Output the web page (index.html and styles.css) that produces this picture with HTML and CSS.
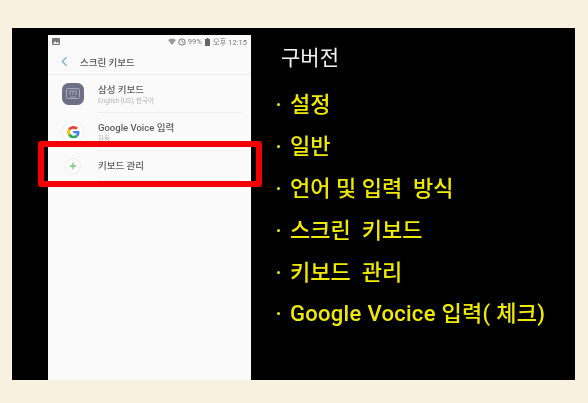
FILE: index.html
```html
<!DOCTYPE html>
<html lang="ko">
<head>
<meta charset="utf-8">
<title>키보드 설정</title>
<link rel="stylesheet" href="styles.css">
</head>
<body>
<main class="slide">
  <section class="phone">
    <div class="status">
      <svg class="pic" viewBox="0 0 8 7"><rect width="8" height="7" rx="1" fill="#777"/><path d="M1 6l2-3 1.5 2L6 3.5 7 6z" fill="#eee"/></svg>
      <div class="status-right">
        <svg class="wifi" viewBox="0 0 8 7"><path d="M0 2q4-3 8 0L4 7z" fill="#999"/></svg>
        <svg class="dnd" viewBox="0 0 8 8"><circle cx="4" cy="4" r="3.2" fill="none" stroke="#777" stroke-width="1"/><path d="M4 2v2l2 1" fill="none" stroke="#777" stroke-width=".8"/></svg>
        <span>99%</span>
        <svg class="batt" viewBox="0 0 5 8"><path d="M1.5 0h2v1H5v7H0V1h1.5z" fill="#666"/></svg>
        <span>오후 12:15</span>
      </div>
    </div>
    <header class="bar">
      <svg class="back" viewBox="0 0 8 12"><path d="M6.5 1L1.5 6l5 5" fill="none" stroke="#6fb1cf" stroke-width="1.5"/></svg>
      <span>스크린 키보드</span>
    </header>
    <div class="row row-first">
      <div class="ico-wrap">
        <svg class="ico" viewBox="0 0 22 22"><rect width="22" height="22" rx="6.5" fill="#6c7187"/><rect x="4.5" y="5.5" width="13" height="10" rx="1" fill="none" stroke="#a5a8b6" stroke-width="1"/><path d="M7 8h8M8 8v4M11 8v4M14 8v4M8 14h6" stroke="#a5a8b6" stroke-width=".9"/></svg>
      </div>
      <div class="txt rule">
        <div class="name">삼성 키보드</div>
        <div class="sub">English (US), 한국어</div>
      </div>
    </div>
    <div class="row row-google">
      <div class="ico-wrap">
        <svg class="ico" viewBox="0 0 22 22"><circle cx="11" cy="11" r="10.5" fill="#fff" stroke="#efefef"/><path d="M16 6.8A6.5 6.5 0 0 0 6.2 7.6L8.3 9.4a3.7 3.7 0 0 1 5.6-.6z" fill="#ea4335"/><path d="M6.2 7.6a6.5 6.5 0 0 0 0 6.8l2.1-1.8a3.7 3.7 0 0 1 0-3.2z" fill="#fbbc05"/><path d="M6.2 14.4a6.5 6.5 0 0 0 9.7 1.3l-2-1.7a3.7 3.7 0 0 1-5.6-1.4z" fill="#34a853"/><path d="M11.2 9.9v2.4h3.3a3 3 0 0 1-.6 1.7l2 1.7c1.3-1.3 1.8-3.4 1.4-5.8z" fill="#4285f4"/></svg>
      </div>
      <div class="txt rule">
        <div class="name">Google Voice 입력</div>
        <div class="sub">자동</div>
      </div>
    </div>
    <div class="row row-manage">
      <div class="ico-wrap">
        <svg class="ico" viewBox="0 0 16 16"><circle cx="8" cy="8" r="7.5" fill="#fbfbfb" stroke="#eeeeee"/><path d="M8 4.8v6.4M4.8 8h6.4" stroke="#7ccb78" stroke-width="1.4"/></svg>
      </div>
      <div class="txt rule">
        <div class="name">키보드 관리</div>
      </div>
    </div>
  </section>
  <section class="notes">
    <h1 class="title">구버전</h1>
    <ul class="list">
      <li>설정</li>
      <li>일반</li>
      <li>언어 및 입력&nbsp; 방식</li>
      <li>스크린&nbsp; 키보드</li>
      <li>키보드&nbsp; 관리</li>
      <li class="wide">Google Vocice 입력( 체크)</li>
    </ul>
  </section>
  <div class="highlight"></div>
</main>
</body>
</html>
```
FILE: styles.css
```css
* { box-sizing: border-box; }
html, body { margin: 0; height: 100%; }
body {
  width: 588px;
  height: 403px;
  padding: 28px 13px 23px 12px;
  background: #f8f1e1;
  font-family: Roboto, "Noto Sans CJK KR", sans-serif;
  overflow: hidden;
}
.slide {
  position: relative;
  display: flex;
  height: 352px;
  padding: 7px 0 0 36px;
  background: #000;
}
.phone {
  width: 203px;
  flex: none;
  background: #fafafa;
  color: #555;
  filter: blur(0.6px);
}
.status {
  display: flex;
  justify-content: space-between;
  align-items: center;
  height: 13px;
  padding: 0 4px;
  font-size: 7.5px;
  color: #777;
}
.status-right { display: flex; align-items: center; gap: 2px; }
.pic { width: 8px; height: 7px; }
.wifi { width: 8px; height: 7px; }
.dnd { width: 8px; height: 8px; }
.batt { width: 5px; height: 8px; margin: 0 1px; }
.bar {
  display: flex;
  align-items: center;
  height: 27px;
  padding: 1px 0 0 13px;
  gap: 12px;
  font-size: 9.5px;
  font-weight: 500;
  border-bottom: 1px solid #f1f1f1;
}
.back { width: 7px; height: 11px; }
.row { display: flex; padding-left: 14px; }
.row-first { height: 38px; }
.row-google { height: 38px; }
.row-manage { height: 30px; }
.ico-wrap { width: 36px; flex: none; display: flex; align-items: center; }
.ico { width: 22px; height: 22px; }
.row-manage .ico { width: 16px; height: 16px; margin-left: 3px; }
.txt { flex: 1; margin-right: 10px; padding-top: 8px; }
.rule { border-bottom: 1px solid #efefef; }
.row-manage .txt { padding-top: 8px; }
.name { font-size: 9.5px; line-height: 14px; font-weight: 500; color: #5c5c5c; }
.sub { font-size: 6.5px; line-height: 9px; color: #b5b5b5; }
.notes { margin-left: 30px; padding-top: 8px; filter: blur(0.35px); }
.title {
  margin: 0 0 17px;
  font-size: 21px;
  line-height: 30px;
  font-weight: 400;
  color: #f2f2f2;
}
.list { margin: 0 0 0 -4px; padding: 0; list-style: none; }
.list li {
  position: relative;
  height: 41.9px;
  padding-left: 13px;
  font-size: 22px;
  line-height: 30px;
  font-weight: 500;
  color: #f0ea00;
}
.list li.wide { letter-spacing: 0.3px; }
.list li::before {
  content: "";
  position: absolute;
  left: 0;
  top: 13px;
  width: 3px;
  height: 3px;
  border-radius: 50%;
  background: #f0ea00;
}
.highlight {
  position: absolute;
  left: 26px;
  top: 113px;
  width: 224px;
  height: 46px;
  border: 6px solid #f50000;
  border-radius: 3px;
}
```
